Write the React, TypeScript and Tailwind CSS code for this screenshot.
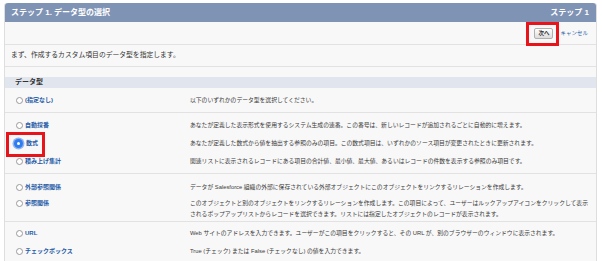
import type { FC, ReactNode } from "react";

type Item = {
  label: string;
  desc: ReactNode;
  checked?: boolean;
};

const Radio: FC<{ checked?: boolean }> = ({ checked }) =>
  checked ? (
    <span className="ml-[-2px] mr-[1px] flex h-[9px] w-[9px] shrink-0 items-center justify-center rounded-full bg-[#2f7bf0] ring-[1.5px] ring-[#8fb5ee]">
      <span className="h-[3px] w-[3px] rounded-full bg-white" />
    </span>
  ) : (
    <span className="h-[7px] w-[7px] shrink-0 rounded-full border border-[#9a9a9a] bg-white" />
  );

const Row: FC<{ item: Item }> = ({ item }) => (
  <div className="flex leading-[11px]">
    <div className="flex h-[11px] w-[185px] shrink-0 items-center gap-[2px] pl-[11px]">
      <Radio checked={item.checked} />
      <span className="text-[6px] font-semibold text-[#1f5aa6]">{item.label}</span>
    </div>
    <div className="flex-1 pr-[3px] text-[5.8px] text-[#3a3a3a]">{item.desc}</div>
  </div>
);

const groups: { cls: string; items: Item[] }[] = [
  {
    cls: "pt-[7px] pb-[6px] gap-[7px]",
    items: [{ label: "(指定なし)", desc: "以下のいずれかのデータ型を選択してください。" }],
  },
  {
    cls: "pt-[7px] pb-[6px] gap-[7px]",
    items: [
      {
        label: "自動採番",
        desc: "あなたが定義した表示形式を使用するシステム生成の連番。この番号は、新しいレコードが追加されるごとに自動的に増えます。",
      },
      {
        label: "数式",
        checked: true,
        desc: "あなたが定義した数式から値を抽出する参照のみの項目。この数式項目は、いずれかのソース項目が変更されたときに更新されます。",
      },
      {
        label: "積み上げ集計",
        desc: "関連リストに表示されるレコードにある項目の合計値、最小値、最大値、あるいはレコードの件数を表示する参照のみ項目です。",
      },
    ],
  },
  {
    cls: "pt-[8px] pb-[1px] gap-[5px]",
    items: [
      {
        label: "外部参照関係",
        desc: "データが Salesforce 組織の外部に保存されている外部オブジェクトにこのオブジェクトをリンクするリレーションを作成します。",
      },
      {
        label: "参照関係",
        desc: "このオブジェクトと別のオブジェクトをリンクするリレーションを作成します。この項目によって、ユーザーはルックアップアイコンをクリックして表示されるポップアップリストからレコードを選択できます。リストには指定したオブジェクトのレコードが表示されます。",
      },
    ],
  },
  {
    cls: "pt-[6px] pb-[6px] gap-[7px]",
    items: [
      {
        label: "URL",
        desc: "Web サイトのアドレスを入力できます。ユーザーがこの項目をクリックすると、その URL が、別のブラウザーのウィンドウに表示されます。",
      },
      { label: "チェックボックス", desc: "True (チェック) または False (チェックなし) の値を入力できます。" },
    ],
  },
];

const App: FC = () => {
  return (
    <div
      className="relative h-[261px] w-[602px] overflow-hidden bg-white pl-[4px] pr-[5px] pt-[3px]"
      style={{ fontFamily: "'Liberation Sans', 'Noto Sans CJK JP', sans-serif" }}
    >
      <div className="h-full rounded-t-[3px] border-x border-[#dedede] bg-[#f8f8f8]">
        {/* header */}
        <div className="flex h-[19px] items-center justify-between rounded-t-[3px] bg-[#7f93b5] pl-[6px] pr-[7px] text-[8px] font-bold text-white">
          <span>ステップ 1. データ型の選択</span>
          <span>ステップ 1</span>
        </div>

        {/* buttons */}
        <div className="flex h-[23px] items-center justify-end gap-[7px] border-b border-[#e2e2e2] pr-[8px]">
          <button className="flex h-[11px] w-[19px] items-center justify-center rounded-[2px] border border-[#b0b0b0] bg-gradient-to-b from-white to-[#dcdcdc] text-[5.5px] font-bold text-[#333]">
            次へ
          </button>
          <span className="text-[5.5px] text-[#1f5aa6]">キャンセル</span>
        </div>

        {/* intro */}
        <div className="flex h-[22px] items-center border-b border-[#e2e2e2] pl-[6px] text-[6.8px] text-[#333]">
          まず、作成するカスタム項目のデータ型を指定します。
        </div>

        <div className="h-[10px]" />

        <div className="flex h-[11px] items-center bg-[#e1e6ee] pl-[10px] text-[7px] font-bold text-[#333]">
          データ型
        </div>

        {groups.map((g, i) => (
          <div key={i} className={`flex flex-col border-b border-[#e2e2e2] ${g.cls}`}>
            {g.items.map((item) => (
              <Row key={item.label} item={item} />
            ))}
          </div>
        ))}
      </div>

      {/* annotation boxes */}
      <div className="absolute left-[526px] top-[22px] h-[24px] w-[33px] border-[3px] border-[#e8141c]" />
      <div className="absolute left-[6px] top-[132px] h-[25px] w-[39px] border-[3px] border-[#e8141c]" />
    </div>
  );
};

export default App;
